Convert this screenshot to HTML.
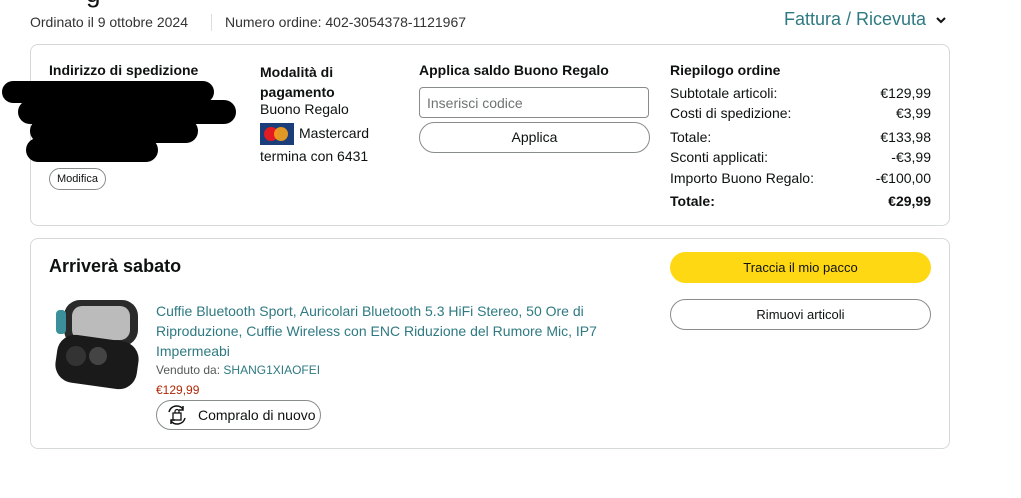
<!DOCTYPE html>
<html><head><meta charset="utf-8"><style>
*{margin:0;padding:0;box-sizing:border-box}
body{width:1021px;height:498px;background:#fff;font-family:"Liberation Sans",sans-serif;color:#0f1111;position:relative;overflow:hidden;font-size:14px}
.a{position:absolute;white-space:nowrap}
.box{position:absolute;border:1px solid #d5d9d9;border-radius:8px}
.b{font-weight:bold}
.btn{position:absolute;border:1px solid #888c8c;border-radius:16px;text-align:center;font-size:13px}
.blot{position:absolute;background:#000;border-radius:20px}
.row{position:absolute;left:670px;width:261px;display:flex;justify-content:space-between;font-size:14px}
</style></head><body>
<div class="a" style="left:86px;top:-22px;font-size:26px">g</div>
<div class="a" style="left:30px;top:14px;font-size:14px;color:#333">Ordinato il 9 ottobre 2024</div>
<div style="position:absolute;left:211px;top:14px;width:1px;height:17px;background:#ddd"></div>
<div class="a" style="left:225px;top:14px;font-size:14px;color:#333">Numero ordine: 402-3054378-1121967</div>
<div class="a" style="left:784px;top:9px;font-size:18px;color:#2f7a82">Fattura / Ricevuta</div>
<svg class="a" style="left:935px;top:15px" width="12" height="10"><path d="M2 3l4 4 4-4" stroke="#0f1111" stroke-width="2" fill="none"/></svg>

<div class="box" style="left:30px;top:44px;width:920px;height:182px"></div>
<div class="a b" style="left:49px;top:62px">Indirizzo di spedizione</div>
<div class="blot" style="left:2px;top:81px;width:212px;height:22px"></div>
<div class="blot" style="left:18px;top:100px;width:218px;height:24px"></div>
<div class="blot" style="left:30px;top:119px;width:168px;height:24px"></div>
<div class="blot" style="left:26px;top:138px;width:132px;height:24px"></div>
<div class="btn" style="left:49px;top:168px;width:57px;height:22px;line-height:20px;font-size:11px;border-radius:11px">Modifica</div>

<div class="a b" style="left:260px;top:62px;line-height:20px">Modalità di<br>pagamento</div>
<div class="a" style="left:260px;top:101px">Buono Regalo</div>
<div class="a" style="left:260px;top:123px;width:34px;height:22px;background:#1b3d7a"><div style="position:absolute;left:4px;top:4px;width:14px;height:14px;border-radius:50%;background:#e31b23"></div><div style="position:absolute;left:14px;top:4px;width:14px;height:14px;border-radius:50%;background:#f7a21b;opacity:.9"></div></div>
<div class="a" style="left:299px;top:125px">Mastercard</div>
<div class="a" style="left:260px;top:148px">termina con 6431</div>

<div class="a b" style="left:419px;top:62px">Applica saldo Buono Regalo</div>
<div style="position:absolute;left:419px;top:87px;width:230px;height:31px;border:1px solid #888c8c;border-radius:4px"></div>
<div class="a" style="left:427px;top:95px;color:#6f7373;font-size:14px">Inserisci codice</div>
<div class="btn" style="left:419px;top:122px;width:231px;height:31px;line-height:29px;border-radius:16px;font-size:14px">Applica</div>

<div class="a b" style="left:670px;top:62px">Riepilogo ordine</div>
<div class="row" style="top:85px"><span>Subtotale articoli:</span><span>€129,99</span></div>
<div class="row" style="top:105px"><span>Costi di spedizione:</span><span>€3,99</span></div>
<div class="row" style="top:129px"><span>Totale:</span><span>€133,98</span></div>
<div class="row" style="top:149px"><span>Sconti applicati:</span><span>-€3,99</span></div>
<div class="row" style="top:170px"><span>Importo Buono Regalo:</span><span>-€100,00</span></div>
<div class="row b" style="top:193px"><span>Totale:</span><span>€29,99</span></div>

<div class="box" style="left:30px;top:238px;width:920px;height:211px"></div>
<div class="a b" style="left:49px;top:256px;font-size:18px">Arriverà sabato</div>
<div class="a" style="left:670px;top:252px;width:261px;height:31px;background:#ffd814;border-radius:16px;text-align:center;line-height:31px;font-size:13px">Traccia il mio pacco</div>
<div class="btn" style="left:670px;top:299px;width:261px;height:31px;line-height:29px">Rimuovi articoli</div>

<svg class="a" style="left:52px;top:298px" width="90" height="92"><rect x="12" y="2" width="74" height="46" rx="16" fill="#2a2a2a"/><rect x="20" y="8" width="58" height="34" rx="10" fill="#bbb"/><rect x="4" y="40" width="82" height="48" rx="18" fill="#1a1a1a" transform="rotate(8 45 64)"/><circle cx="24" cy="58" r="10" fill="#333"/><circle cx="46" cy="58" r="9" fill="#444"/><rect x="4" y="12" width="10" height="24" rx="4" fill="#3a8f9a"/></svg>
<div class="a" style="left:156px;top:301px;color:#2f7a82;line-height:20px;font-size:14px">Cuffie Bluetooth Sport, Auricolari Bluetooth 5.3 HiFi Stereo, 50 Ore di<br>Riproduzione, Cuffie Wireless con ENC Riduzione del Rumore Mic, IP7<br>Impermeabi</div>
<div class="a" style="left:156px;top:363px;font-size:12px;color:#565959">Venduto da: <span style="color:#2f7a82">SHANG1XIAOFEI</span></div>
<div class="a" style="left:156px;top:383px;font-size:12px;color:#b12704">€129,99</div>
<div class="btn" style="left:156px;top:400px;width:165px;height:30px;border-radius:15px"></div>
<svg class="a" style="left:164px;top:403px" width="26" height="24"><path d="M5 9a8 8 0 0 1 14-3M21 15a8 8 0 0 1-14 3" stroke="#0f1111" stroke-width="1.5" fill="none"/><path d="M19 3v4h-4M7 21v-4h4" stroke="#0f1111" stroke-width="1.5" fill="none"/><rect x="9" y="10" width="8" height="7" stroke="#0f1111" stroke-width="1.3" fill="none"/><path d="M11 10V8.5a2 2 0 0 1 4 0V10" stroke="#0f1111" stroke-width="1.2" fill="none"/></svg>
<div class="a" style="left:198px;top:407px;font-size:14px">Compralo di nuovo</div>
</body></html>
